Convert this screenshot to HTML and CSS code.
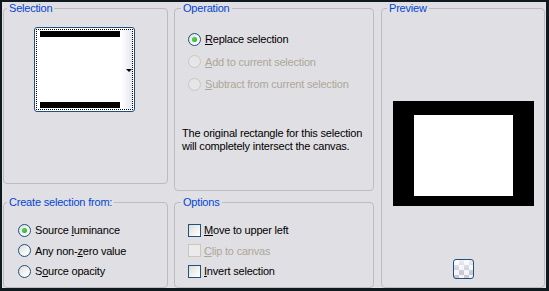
FILE: index.html
```html
<!DOCTYPE html>
<html lang="en">
<head>
    <meta charset="UTF-8">
    <title>Selection from Mask</title>
    <link rel="stylesheet" href="styles.css">
</head>
<body>
    <div class="dialog">
        <div class="col col-left">
            <fieldset class="group group-selection">
                <legend>Selection</legend>
                <div class="swatch">
                    <div class="swatch-inner">
                        <div class="swatch-canvas">
                            <div class="bar"></div>
                            <div class="bar"></div>
                        </div>
                        <div class="swatch-drop"><span class="arrow"></span></div>
                    </div>
                </div>
            </fieldset>

            <fieldset class="group group-create">
                <legend>Create selection from:</legend>
                <div class="opt-list">
                    <label class="opt"><span class="radio checked"></span><span>Source <u>l</u>uminance</span></label>
                    <label class="opt"><span class="radio"></span><span>Any non-<u>z</u>ero value</span></label>
                    <label class="opt"><span class="radio"></span><span>S<u>o</u>urce opacity</span></label>
                </div>
            </fieldset>
        </div>

        <div class="col col-mid">
            <fieldset class="group group-operation">
                <legend>Operation</legend>
                <div class="opt-list">
                    <label class="opt"><span class="radio checked"></span><span><u>R</u>eplace selection</span></label>
                    <label class="opt disabled"><span class="radio"></span><span><u>A</u>dd to current selection</span></label>
                    <label class="opt disabled"><span class="radio"></span><span><u>S</u>ubtract from current selection</span></label>
                </div>
                <p class="note">The original rectangle for this selection<br>will completely intersect the canvas.</p>
            </fieldset>

            <fieldset class="group group-options">
                <legend>Options</legend>
                <div class="opt-list">
                    <label class="opt"><span class="check"></span><span><u>M</u>ove to upper left</span></label>
                    <label class="opt disabled"><span class="check"></span><span><u>C</u>lip to canvas</span></label>
                    <label class="opt"><span class="check"></span><span><u>I</u>nvert selection</span></label>
                </div>
            </fieldset>
        </div>

        <div class="col col-right">
            <fieldset class="group group-preview">
                <legend>Preview</legend>
                <div class="preview">
                    <div class="preview-canvas"></div>
                </div>
                <button class="bg-button" type="button"></button>
            </fieldset>
        </div>
    </div>
</body>
</html>
```

FILE: styles.css
```css
* {
    margin: 0;
    padding: 0;
    box-sizing: border-box;
}

html, body {
    width: 549px;
    height: 291px;
    overflow: hidden;
}

body {
    background: #10191d;
    padding: 2px 3px 3px 2px;
    font-family: 'Liberation Sans', Arial, sans-serif;
    font-size: 11px;
    letter-spacing: -0.2px;
    color: #000;
}

.dialog {
    display: flex;
    height: 286px;
    background: #e0dfe3;
    padding: 0 1px;
}

.col {
    display: flex;
    flex-direction: column;
    justify-content: space-between;
}

.col-left { width: 165px; }
.col-mid { width: 200px; margin-left: 6px; }
.col-right { width: 164px; margin-left: 7px; }

.group {
    border: 1px solid #bdbcc0;
    border-radius: 4px;
    padding: 0;
    min-width: 0;
}

.group legend {
    color: #0046d5;
    line-height: 13px;
    padding: 0 2px;
    margin-left: 3px;
}

.col-mid .group legend { margin-left: 6px; }
.col-right .group legend { margin-left: 5px; }

.group-selection { height: 182px; }
.group-create { height: 92px; }
.group-operation { height: 189px; }
.group-options { height: 92px; }
.group-preview { height: 286px; }

/* selection swatch */
.swatch {
    width: 101px;
    height: 85px;
    margin: 12px 0 0 30px;
    border: 1px solid #1c4e7e;
    border-radius: 3px;
    background: #fff;
    padding: 1px;
}

.swatch-inner {
    display: flex;
    height: 100%;
    border: 1px dotted #000;
}

.swatch-canvas {
    flex: 1;
    display: flex;
    flex-direction: column;
    justify-content: space-between;
    padding: 1px 0 1px 3px;
}

.bar {
    width: 80px;
    height: 6px;
    background: #000;
}

.swatch-drop {
    width: 10px;
    display: flex;
    align-items: center;
    justify-content: center;
    background: linear-gradient(to right, #fdfdfe, #e6e8f0);
}

.arrow {
    width: 0;
    height: 0;
    border-left: 3px solid transparent;
    border-right: 3px solid transparent;
    border-top: 3px solid #000;
    margin: 1px 0 0 3px;
}

/* radios and checkboxes */
.opt-list {
    display: flex;
    flex-direction: column;
}

.opt {
    display: flex;
    align-items: center;
    gap: 4px;
    white-space: nowrap;
}

.opt.disabled { color: #aca899; }

.radio {
    width: 13px;
    height: 13px;
    border-radius: 50%;
    border: 1px solid #1c5180;
    background: linear-gradient(135deg, #dcdcd7 0%, #f6f6f4 60%, #fff 100%);
    display: flex;
    align-items: center;
    justify-content: center;
    flex-shrink: 0;
}

.radio.checked::after {
    content: "";
    width: 5px;
    height: 5px;
    border-radius: 50%;
    background: radial-gradient(circle at 40% 40%, #55d655, #21a121);
}

.opt.disabled .radio {
    border-color: #cac8bb;
    background: #e6e5e8;
}

.check {
    width: 13px;
    height: 13px;
    border: 1px solid #1c5180;
    background: linear-gradient(135deg, #dcdcd7 0%, #f3f3f1 60%, #fff 100%);
    flex-shrink: 0;
    margin-right: -1px;
}

.opt.disabled .check {
    border-color: #cac8bb;
    background: #ebeaed;
}

.group-operation .opt-list { margin: 13px 0 0 13px; }
.group-operation .opt { height: 22.5px; }

.note {
    margin: 31px 0 0 7px;
    line-height: 13px;
}

.group-create .opt-list { margin: 11px 0 0 14px; }
.group-create .opt { height: 20.5px; }

.group-options .opt-list { margin: 11px 0 0 13px; }
.group-options .opt { height: 20.5px; }

/* preview */
.group-preview {
    display: flex;
    flex-direction: column;
    align-items: center;
}

.preview {
    width: 141px;
    height: 105px;
    margin-top: 86px;
    background: #000;
    padding: 14px 21px 10px 21px;
}

.preview-canvas {
    width: 100%;
    height: 100%;
    background: #fff;
}

.bg-button {
    width: 21px;
    height: 20px;
    margin-top: 53px;
    border: 1px solid #1c5180;
    border-radius: 3px;
    background:
        linear-gradient(to bottom, rgba(255,255,255,0.7), rgba(255,255,255,0) 70%),
        repeating-conic-gradient(#c8c8d8 0% 25%, #f4f4f8 0% 50%) 0 0 / 10px 10px;
}
```
